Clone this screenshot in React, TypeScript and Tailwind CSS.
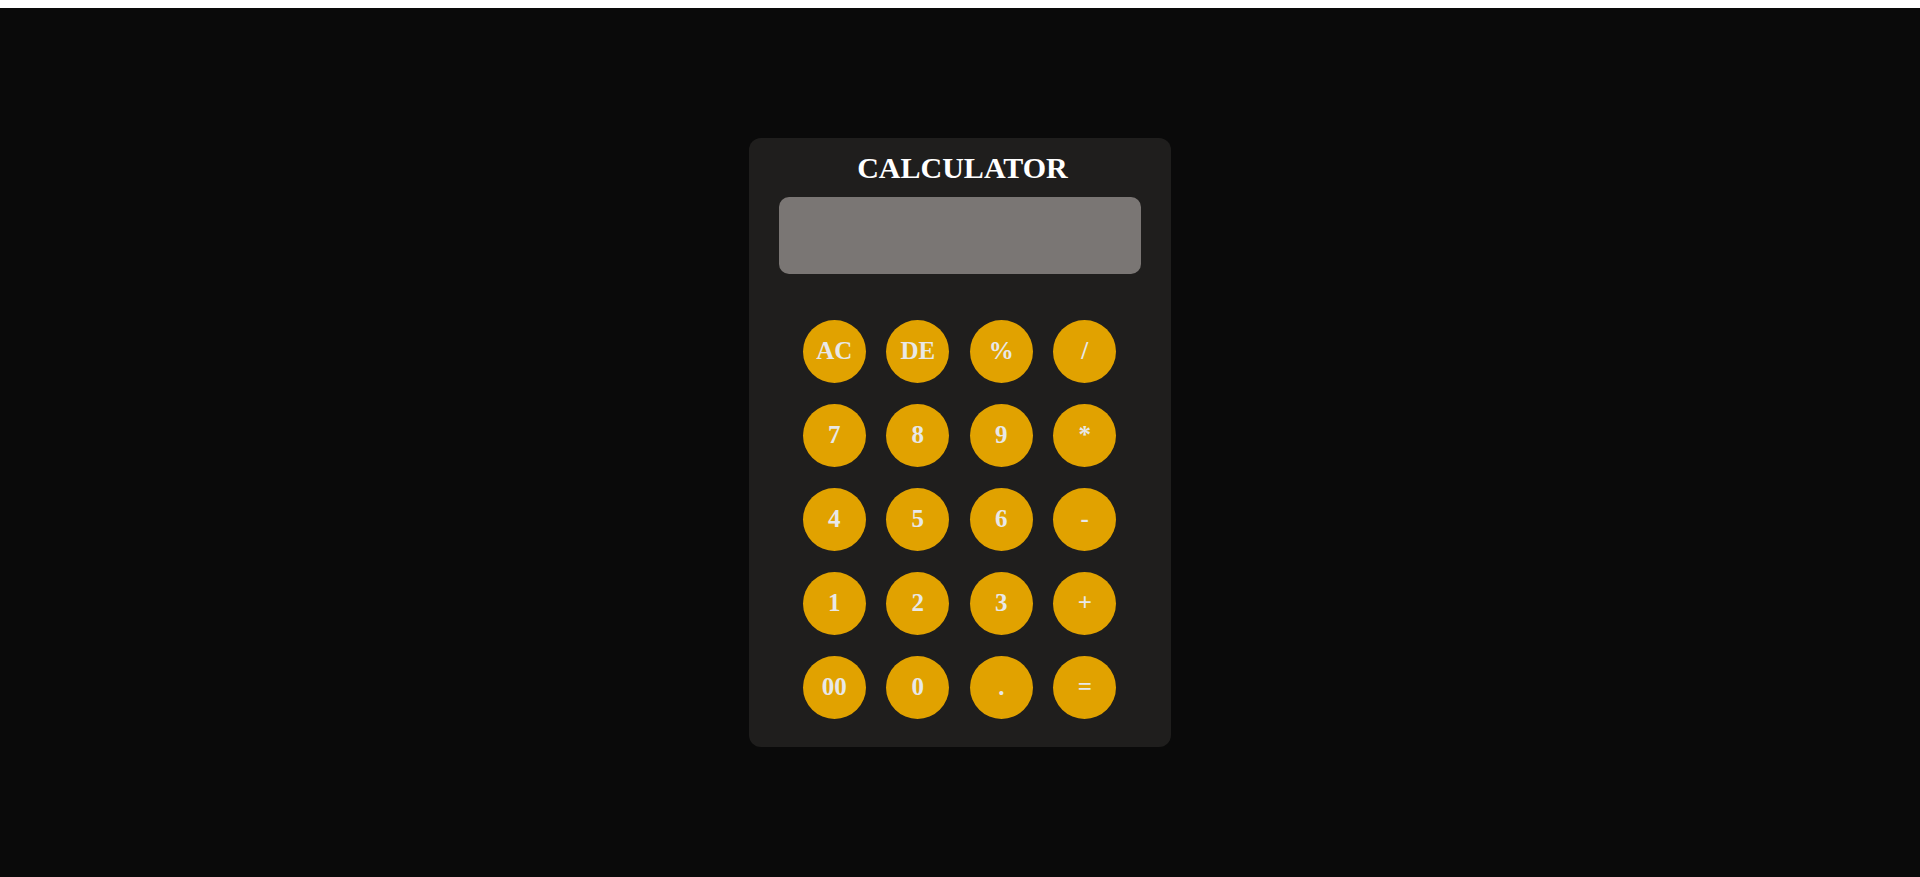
const keys = [
  "AC", "DE", "%", "/",
  "7", "8", "9", "*",
  "4", "5", "6", "-",
  "1", "2", "3", "+",
  "00", "0", ".", "=",
]

export default function App() {
  return (
    <div className="min-h-screen bg-white pt-[8px]" style={{ fontFamily: '"Liberation Serif", "Times New Roman", serif' }}>
      <div className="flex h-[869px] items-center justify-center bg-[#0a0a0a]">
        <div className="w-[422px] rounded-[12px] bg-[#1f1e1d] px-[30px] pt-[13px] pb-[28px]">
          <h1 className="pl-[5px] text-center text-[30px] font-bold leading-[34px] text-white">CALCULATOR</h1>
          <div className="mt-[12px] h-[77px] w-full rounded-[10px] bg-[#7a7674]" />
          <div className="mt-[46px] grid grid-cols-[repeat(4,63px)] justify-center gap-x-[20.5px] gap-y-[21px] pr-[1px]">
            {keys.map((k) => (
              <button
                key={k}
                className="flex h-[63px] w-[63px] items-center justify-center rounded-full bg-[#e1a200] pb-[2px] text-[25px] font-bold text-[#e8e8e8]"
              >
                {k}
              </button>
            ))}
          </div>
        </div>
      </div>
    </div>
  )
}
